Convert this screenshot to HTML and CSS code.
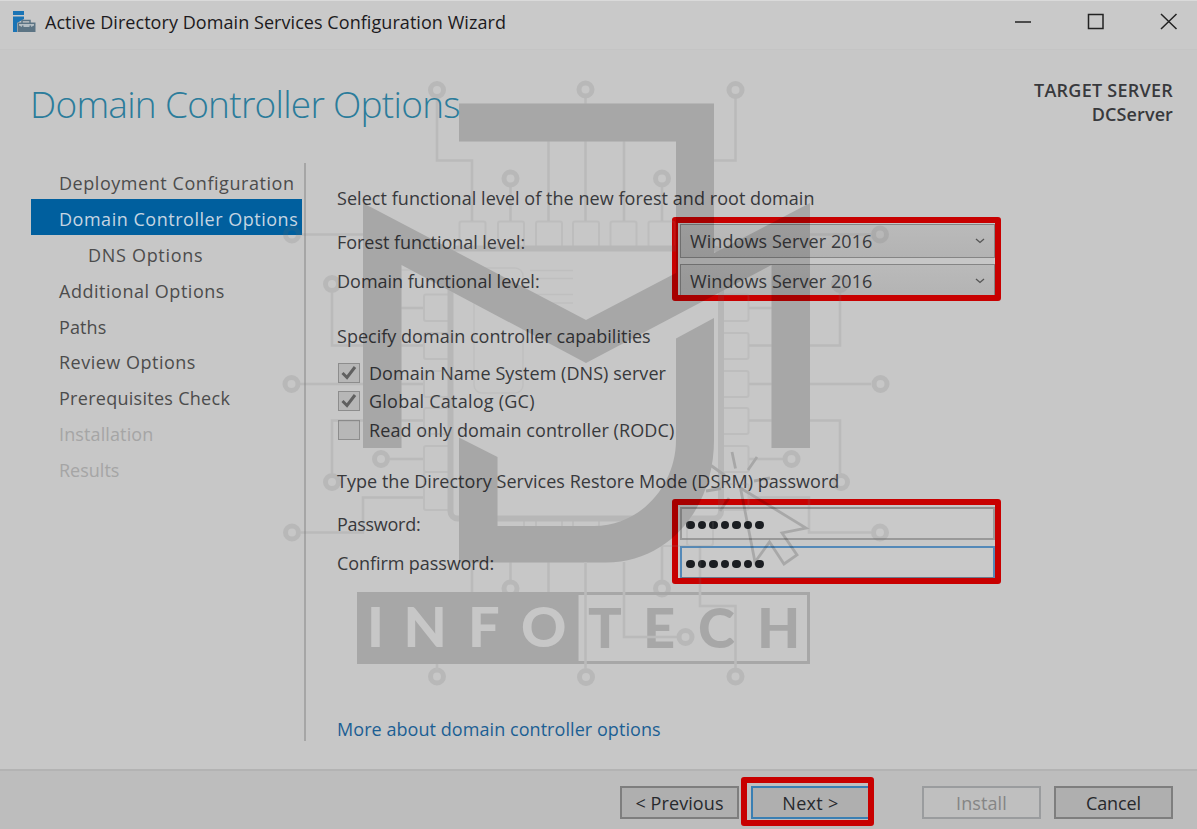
FILE: index.html
```html
<!DOCTYPE html>
<html lang="en">
<head>
<meta charset="utf-8">
<title>Active Directory Domain Services Configuration Wizard</title>
<link rel="stylesheet" href="styles.css">
</head>
<body>
<div class="window">
  <header class="titlebar">
    <svg class="app-icon" width="24" height="24" viewBox="0 0 24 24">
      <path d="M1 1h11v4H1zM1 6.500h11V9L5 13v9H1z" fill="#1a74b5"/>
      <path d="M10 13v-2.500h8V13" fill="none" stroke="#5c7484" stroke-width="1.500"/>
      <path d="M5.500 12.500h18V22h-18z" fill="#5c7484"/>
      <path d="M7 14h15v1.500l-3 1.500H10l-3-1.500z" fill="#b3bdc3"/>
      <path d="M10 15.500h1.500v2.500H10zM17.500 15.500H19v2.500h-1.500z" fill="#5c7484"/>
    </svg>
    <span class="title">Active Directory Domain Services Configuration Wizard</span>
    <div class="controls">
      <svg width="18" height="18" viewBox="0 0 18 18"><path d="M1 9h16"/></svg>
      <svg width="18" height="18" viewBox="0 0 18 18"><rect x="1.500" y="1.500" width="14.500" height="14"/></svg>
      <svg width="18" height="18" viewBox="0 0 18 18"><path d="M1 1l15.500 15M16.500 1L1 16"/></svg>
    </div>
  </header>

  <section class="heading">
    <h1>Domain Controller Options</h1>
    <div class="target"><span class="t1">TARGET SERVER</span><span class="t2">DCServer</span></div>
  </section>

  <main class="main">
    <nav class="nav">
      <div class="item"><span class="n1">Deployment Configuration</span></div>
      <div class="item active"><span class="n2">Domain Controller Options</span></div>
      <div class="item sub"><span class="n3">DNS Options</span></div>
      <div class="item"><span class="n4">Additional Options</span></div>
      <div class="item"><span class="n5">Paths</span></div>
      <div class="item"><span class="n6">Review Options</span></div>
      <div class="item"><span class="n7">Prerequisites Check</span></div>
      <div class="item disabled"><span class="n8">Installation</span></div>
      <div class="item disabled"><span class="n9">Results</span></div>
    </nav>

    <form class="form">
      <p class="line first"><span class="f1">Select functional level of the new forest and root domain</span></p>
      <div class="fields">
        <div class="labels"><label class="f2">Forest functional level:</label><label class="f3">Domain functional level:</label></div>
        <div class="mark levels">
          <div class="select"><span>Windows Server 2016</span><svg width="10" height="6" viewBox="0 0 10 6"><path d="M1 1l4 3.500L9 1"/></svg></div>
          <div class="select"><span>Windows Server 2016</span><svg width="10" height="6" viewBox="0 0 10 6"><path d="M1 1l4 3.500L9 1"/></svg></div>
        </div>
      </div>
      <p class="line specify"><span class="f4">Specify domain controller capabilities</span></p>
      <div class="checks">
        <div class="check"><span class="box"><svg width="18" height="16" viewBox="0 0 18 16"><path d="M2.500 8l4.500 4.500L15 2"/></svg></span><span class="f5">Domain Name System (DNS) server</span></div>
        <div class="check"><span class="box"><svg width="18" height="16" viewBox="0 0 18 16"><path d="M2.500 8l4.500 4.500L15 2"/></svg></span><span class="f6">Global Catalog (GC)</span></div>
        <div class="check"><span class="box"></span><span class="f7">Read only domain controller (RODC)</span></div>
      </div>
      <p class="line type"><span class="f8">Type the Directory Services Restore Mode (DSRM) password</span></p>
      <div class="fields secrets">
        <div class="labels"><label class="f9">Password:</label><label class="f10">Confirm password:</label></div>
        <div class="mark passwords">
          <div class="input"><i></i><i></i><i></i><i></i><i></i><i></i><i></i></div>
          <div class="input focus"><i></i><i></i><i></i><i></i><i></i><i></i><i></i></div>
        </div>
      </div>
      <p class="line more"><span class="f11">More about domain controller options</span></p>
    </form>
  </main>

  <footer class="footer">
    <div class="button previous">&lt; Previous</div>
    <div class="mark next"><div class="button">Next &gt;</div></div>
    <div class="button off">Install</div>
    <div class="button">Cancel</div>
  </footer>

  <svg class="watermark" width="1197" height="829" viewBox="0 0 1197 829">
    <g class="wm">
      <g class="faint">
        <rect x="474" y="268" width="49" height="125" rx="8"/>
        <path d="M401 270h73M530 270.500h43M530 278.500h43M530 294.500h43M530 303h43"/>
      </g>
      <g class="pins">
        <rect x="459.500" y="221.500" width="26" height="26" rx="2"/><rect x="498" y="221.500" width="26" height="26" rx="2"/><rect x="536" y="221.500" width="26" height="26" rx="2"/><rect x="573" y="221.500" width="26" height="26" rx="2"/><rect x="610.500" y="221.500" width="26" height="26" rx="2"/><rect x="648.500" y="221.500" width="26" height="26" rx="2"/>
        <rect x="424" y="294.500" width="26" height="26.500" rx="2"/><rect x="424" y="333" width="26" height="26" rx="2"/><rect x="424" y="371" width="26" height="26" rx="2"/><rect x="424" y="408" width="26" height="26" rx="2"/><rect x="424" y="446" width="26" height="26" rx="2"/><rect x="424" y="472" width="26" height="38" rx="2"/>
        <rect x="722" y="294.500" width="26.500" height="26.500" rx="2"/><rect x="722" y="333" width="26.500" height="26" rx="2"/><rect x="722" y="371" width="26.500" height="26" rx="2"/><rect x="722" y="408" width="26.500" height="26" rx="2"/><rect x="722" y="446" width="26.500" height="26" rx="2"/><rect x="722" y="484" width="26.500" height="26" rx="2"/>
        <path d="M524 520v6M536 520v6M562 520v6M573 520v6M599 520v26M687 520v23q0 3 3 3h20q3 0 3-3v-23M640 546h47"/>
      </g>
      <rect class="chip" x="450.500" y="248.500" width="270.500" height="270" rx="7"/>
      <g class="traces">
        <path d="M437 98v62.500h35V221M735.500 98v62.500H700M510.500 187v34M662 187v34M548.500 141v80M585.500 98v123M624 141v80"/>
        <path d="M300 234.500h63M332 293v52.500h91M300 384h123M332 473v-52.500h91M390 459h33M301 532.500h62V497.500h60M401 308h22"/>
        <path d="M871 234.500h-61M840 293v52.500h-91M871 384H749M840 473v-52.500h-91M783 459h-34M871 532.500h-62V497.500h-60M772 308h-23"/>
        <path d="M472 562v30M510.500 562v18M548.500 562v30M662 546v34"/>
      </g>
      <g class="nodes">
        <circle cx="437" cy="90" r="6.500"/><circle cx="585.500" cy="89.500" r="6.500"/><circle cx="735.500" cy="90" r="6.500"/><circle cx="510.500" cy="178.500" r="6.500"/><circle cx="662" cy="178.500" r="6.500"/><circle cx="292" cy="234.500" r="6.500"/><circle cx="880" cy="234.500" r="6.500"/><circle cx="332" cy="284" r="6.500"/><circle cx="840" cy="284" r="6.500"/><circle cx="291.500" cy="384" r="6.500"/><circle cx="880.500" cy="384" r="6.500"/><circle cx="381" cy="459" r="6.500"/><circle cx="791.500" cy="459" r="6.500"/><circle cx="332" cy="482" r="6.500"/><circle cx="841" cy="482" r="6.500"/><circle cx="292" cy="532.500" r="6.500"/><circle cx="880" cy="532.500" r="6.500"/><circle cx="510.500" cy="588.500" r="6.500"/><circle cx="662" cy="588.500" r="6.500"/><circle cx="437" cy="676.500" r="6.500"/><circle cx="586" cy="677" r="6.500"/><circle cx="735.500" cy="676.500" r="6.500"/>
      </g>
      <path d="M363 203L586 320L810 203V448H771.500V265L586 363L401.500 265V448H363Z"/>
      <path d="M459 103.500H714V255L676 275V141.500H459Z"/>
      <path d="M714 318V440C714 506 671 562 606 562.500H459V437.500L497.500 457V526H594C640 526 676 486 676 440V338.500Z"/>
      <path d="M357 592H579V664H357Z"/>
      <rect class="frame" x="578" y="593.500" width="230.500" height="69"/>
      <path class="cut" d="M578.500 595H580.500V661H578.500Z"/>
      <g class="word cut">
        <text x="367" y="647">I</text><text x="403.500" y="647">N</text><text x="468" y="647">F</text><text x="521" y="647">O</text>
      </g>
      <g class="word">
        <text x="588" y="648">T</text><text x="643" y="648">E</text><text x="698" y="648">C</text><text x="757" y="648">H</text>
      </g>
      <g class="traces">
        <path d="M585.500 562v107M624 562v75h53M700 546v60h35.500v62M437 664v6"/>
      </g>
      <g class="nodes"><circle cx="685.500" cy="637" r="6.500"/></g>
      <g class="pointer">
        <path d="M740.500 488L806 528L782 533L797 555L784 564L769.500 542L755 562Z"/>
        <path d="M732 452l3.500 16.500M757 457l-9 13M711 465.500l14 10M706 491l15-2.500M729 498l-9 13M754 481l16-3"/>
      </g>
    </g>
  </svg>
</div>
</body>
</html>
```
FILE: styles.css
```css
* { box-sizing: border-box; }
body { margin: 0; background: #c7c7c7; font-family: "Segoe UI", "Open Sans", "Noto Sans", sans-serif; font-size: 18px; color: #38393c; }
p, h1 { margin: 0; font-weight: 400; }
span, label { white-space: nowrap; }
.window { position: relative; width: 1197px; height: 829px; overflow: hidden; display: flex; flex-direction: column; background: #c7c7c7; border-top: 1px solid #dadada; }
.titlebar { height: 49px; padding: 0 19px 6px 12px; display: flex; align-items: center; background: #c9c9c9; border-bottom: 1px solid #c4c4c4; }
.title { margin-left: 9px; color: #1c1a20; letter-spacing: .06px; }
.controls { margin-left: auto; display: flex; gap: 55px; }
.controls svg { fill: none; stroke: #222; stroke-width: 1.500; }
.heading { height: 113px; padding: 28px 24px 0 30px; display: flex; justify-content: space-between; }
h1 { font-size: 37px; line-height: 52px; font-weight: 300; color: #2b7c9b; letter-spacing: -.72px; white-space: nowrap; }
.target { display: flex; flex-direction: column; align-items: flex-end; font-weight: 600; line-height: 24px; }
.t1 { letter-spacing: .25px; }
.t2 { letter-spacing: .1px; }
.main { height: 606px; display: flex; }
.nav { width: 306px; height: 578px; border-right: 2px solid #a6a6a6; padding-left: 31px; }
.item { width: 271px; height: 35.900px; line-height: 41px; padding-left: 28px; font-weight: 400; color: #4c4c4c; }
.item.active { background: #005f9e; color: #c5d5e2; }
.item.sub { padding-left: 57px; }
.item.disabled { color: #a5a5a5; }
.n1 { letter-spacing: .55px; }
.n2 { letter-spacing: .52px; }
.n3 { letter-spacing: .7px; }
.n4 { letter-spacing: .53px; }
.n5 { letter-spacing: .1px; }
.n6 { letter-spacing: .5px; }
.n7 { letter-spacing: .28px; }
.n8 { letter-spacing: .12px; }
.n9 { letter-spacing: 0; }
.form { width: 860px; padding: 23px 0 0 31px; }
.line { height: 24px; line-height: 24px; }
.f1 { letter-spacing: .05px; }
.f2 { letter-spacing: -.04px; }
.f3 { letter-spacing: 0; }
.f4 { letter-spacing: .02px; }
.f5 { letter-spacing: .05px; }
.f6 { letter-spacing: .23px; }
.f7 { letter-spacing: .09px; }
.f8 { letter-spacing: .03px; }
.f9 { letter-spacing: -.28px; }
.f10 { letter-spacing: -.08px; }
.f11 { letter-spacing: .06px; }
.fields { display: flex; margin-top: 7px; }
.labels { width: 335px; padding-top: 5px; display: flex; flex-direction: column; }
.labels label { height: 39px; line-height: 40px; }
.mark { border: 6px solid #c80000; border-radius: 3px; }
.levels, .passwords { width: 329px; height: 84px; flex: none; padding: 1px 0 0 2px; display: flex; flex-direction: column; gap: 6px; overflow: hidden; }
.select { width: 315px; height: 34px; flex: none; border: 1px solid #858585; background: linear-gradient(#bababa, #b3b3b3); padding: 0 9px; display: flex; justify-content: space-between; align-items: center; letter-spacing: .08px; }
.select svg { fill: none; stroke: #555; stroke-width: 1.300; }
.secrets { margin-top: 6px; }
.secrets label { line-height: 41px; }
.passwords { height: 85px; padding-top: 2px; }
.input { width: 315px; height: 33px; flex: none; border: 2px solid #999; border-color: #929292 #999 #999; background: #c9c9c9; display: flex; align-items: center; gap: 3px; padding: 3px 0 0 4px; }
.input.focus { border: 2px solid #5489b8; border-bottom-color: #6a7a8d; }
.input i { width: 8.500px; height: 8.500px; border-radius: 50%; background: #1b1e22; }
.specify { margin-top: 23px; }
.checks { margin-top: 11px; }
.check { height: 28.300px; display: flex; align-items: center; padding-left: 1px; gap: 9px; }
.box { width: 22px; height: 20px; border: 1px solid #8d8d8d; background: #b7b7b7; display: flex; align-items: center; justify-content: center; }
.box svg { fill: none; stroke: #606060; stroke-width: 3; }
.type { margin-top: 25px; }
.more { margin-top: 133px; color: #1c5f94; }
.footer { height: 60px; background: #bdbdbd; border-top: 2px solid #b3b3b3; padding-right: 24px; display: flex; justify-content: flex-end; align-items: flex-start; }
.button { width: 119px; height: 33px; margin-top: 15px; border: 2px solid #7e7e7e; background: #afafaf; line-height: 30px; text-align: center; letter-spacing: -.1px; white-space: nowrap; color: #27292d; }
.previous { letter-spacing: .1px; }
.next { width: 133px; height: 49px; margin: 6px 48px 0 2px; overflow: hidden; padding-left: 4px; background: #c0c0c0; }
.next .button { margin: 3px 0 0; border-color: #3a7fb3; letter-spacing: .3px; }
.off { background: #bfbfbf; border-color: #9a9c9e; color: #858585; margin-right: 13px; letter-spacing: .1px; }
.watermark { position: absolute; left: 0; top: -1px; pointer-events: none; }
.wm { opacity: .155; }
.faint, .pins, .traces, .nodes, .chip, .frame, .pointer { fill: none; }
.faint { stroke: #9b9b9b; stroke-width: 1.500; }
.pins { stroke: #8c8c8c; stroke-width: 2; }
.traces { stroke: #7c7c7c; stroke-width: 2.600; }
.nodes { stroke: #6c6c6c; stroke-width: 5; }
.chip { stroke: #686868; stroke-width: 6; }
.frame { stroke: #000; stroke-width: 3; }
.pointer { stroke: #000; stroke-width: 2.800; }
.cut { fill: #c7c7c7; }
.word { font-family: Lato, sans-serif; font-weight: 900; font-size: 56px; }
```
